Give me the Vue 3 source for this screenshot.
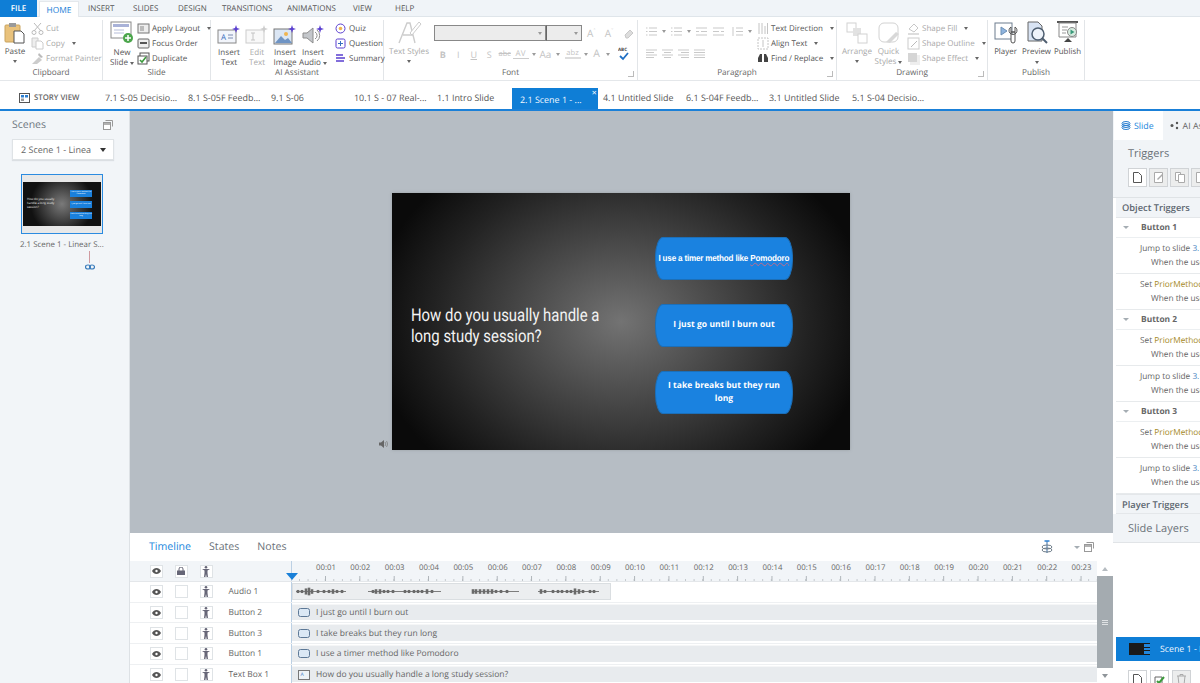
<script setup>
const topTabs = [
  { t: 'INSERT', w: 26, ml: 9 }, { t: 'SLIDES', w: 24, ml: 19 }, { t: 'DESIGN', w: 28, ml: 21 },
  { t: 'TRANSITIONS', w: 50, ml: 16 }, { t: 'ANIMATIONS', w: 47, ml: 15 }, { t: 'VIEW', w: 20, ml: 19 }, { t: 'HELP', w: 18, ml: 22 }
]
const slideTabs = [
  '7.1 S-05 Decisio...', '8.1 S-05F Feedb...', '9.1 S-06', '10.1 S - 07 Real-...', '1.1 Intro Slide',
  '2.1 Scene 1 - ...', '4.1 Untitled Slide', '6.1 S-04F Feedb...', '3.1 Untitled Slide', '5.1 S-04 Decisio...'
]
const seconds = Array.from({ length: 23 }, (_, i) => '00:' + String(i + 1).padStart(2, '0'))
const tracks = [
  { name: 'Button 2', text: 'I just go until I burn out', kind: 'btn' },
  { name: 'Button 3', text: 'I take breaks but they run long', kind: 'btn' },
  { name: 'Button 1', text: 'I use a timer method like Pomodoro', kind: 'btn' },
  { name: 'Text Box 1', text: 'How do you usually handle a long study session?', kind: 'txt' }
]
const triggerGroups = [
  { name: 'Button 1', items: [['Jump to slide ', '3.1 Untitled', 'link'], ['Set ', 'PriorMethod', 'var']] },
  { name: 'Button 2', items: [['Set ', 'PriorMethod', 'var'], ['Jump to slide ', '3.1 Untitled', 'link']] },
  { name: 'Button 3', items: [['Set ', 'PriorMethod', 'var'], ['Jump to slide ', '3.1 Untitled', 'link']] }
]
const waveLines = ['M3 7.500H53', 'M75 7.500H148', 'M180 7.500H226', 'M245 7.500H306']
const wave = [[5,2],[9,2],[13,4],[16,5],[19,3],[25,2],[31,2],[36,2],[40,3],[44,2],[49,2],[80,2],[83,3],[87,3],[91,2],[95,2],[100,2],[112,2],[116,2],[121,2],[125,2],[129,2],[134,3],[139,2],[180,3],[183,3],[187,3],[191,3],[195,3],[199,3],[203,2],[208,2],[214,2],[248,3],[252,2],[260,2],[265,2],[269,2],[274,2],[278,2],[282,4],[286,3],[290,2],[297,2],[301,2]]
</script>

<template>
  <div class="app">
    <!-- top menu -->
    <div class="menubar">
      <div class="file">FILE</div>
      <div class="home">HOME</div>
      <div v-for="x in topTabs" :key="x.t" class="menuitem" :style="{ width: x.w + 'px', marginLeft: x.ml + 'px' }">{{ x.t }}</div>
    </div>

    <!-- ribbon -->
    <div class="ribbon">
      <div class="group g-clip">
        <div class="gbody">
          <div class="big paste">
            <svg width="22" height="22" viewBox="0 0 22 22"><rect x="1" y="3" width="15" height="17" rx="1" fill="#e9c27c" stroke="#c9a35f"/><rect x="5" y="1" width="7" height="4" fill="#9a9a9a"/><path d="M10 9h7l3 3v9H10z" fill="#fff" stroke="#555"/></svg>
            <span>Paste</span><i class="caret"></i>
          </div>
          <div class="smalls dim">
            <div class="sm"><svg width="13" height="13" viewBox="0 0 13 13"><path d="M3 1l7 8M10 1L3 9" stroke="#bbb" fill="none"/><circle cx="3" cy="10.5" r="2" fill="none" stroke="#bbb"/><circle cx="10" cy="10.5" r="2" fill="none" stroke="#bbb"/></svg>Cut</div>
            <div class="sm"><svg width="13" height="13" viewBox="0 0 13 13"><path d="M1 1h6v9H1z" fill="#eee" stroke="#ccc"/><path d="M5 4h5l2 2v6H5z" fill="#fff" stroke="#ccc"/></svg>Copy<i class="caret side"></i></div>
            <div class="sm"><svg width="13" height="13" viewBox="0 0 13 13"><path d="M1 12l7-7 3 3-5 4z" fill="#ccc"/><path d="M8 1l4 4-2 1-3-3z" fill="#bbb"/></svg>Format Painter</div>
          </div>
        </div>
        <div class="glabel">Clipboard</div>
      </div>

      <div class="group g-slide">
        <div class="gbody">
          <div class="big newslide">
            <svg width="24" height="24" viewBox="0 0 24 24"><rect x="1" y="2" width="20" height="16" fill="#fff" stroke="#8a8a8a"/><rect x="3" y="4" width="16" height="3" fill="#a9b2d8"/><path d="M4 10h10M4 13h10" stroke="#b6bdd9"/><circle cx="18" cy="18" r="5" fill="#4ca64c"/><path d="M18 15v6M15 18h6" stroke="#fff" stroke-width="1.5"/></svg>
            <span>New</span><span>Slide<i class="caret side tight"></i></span>
          </div>
          <div class="smalls">
            <div class="sm"><svg width="13" height="13" viewBox="0 0 13 13"><rect x="1" y="2" width="11" height="9" fill="#eee" stroke="#777"/><path d="M3 4h4v5H3z" fill="#bbb"/></svg>Apply Layout<i class="caret side"></i></div>
            <div class="sm"><svg width="13" height="13" viewBox="0 0 13 13"><rect x="1" y="2" width="11" height="9" rx="1" fill="#eee" stroke="#666"/><path d="M3 6h7" stroke="#555" stroke-width="2"/></svg>Focus Order</div>
            <div class="sm"><svg width="13" height="13" viewBox="0 0 13 13"><rect x="3" y="1" width="9" height="8" fill="#fff" stroke="#555"/><rect x="1" y="4" width="9" height="8" fill="#fff" stroke="#555"/><path d="M3 8l2 2 4-5" stroke="#3c9a3c" stroke-width="1.6" fill="none"/></svg>Duplicate</div>
          </div>
        </div>
        <div class="glabel">Slide</div>
      </div>

      <div class="group g-ai">
        <div class="gbody">
          <div class="big ai"><svg width="24" height="20" viewBox="0 0 24 20"><rect x="1" y="5" width="18" height="13" fill="#f2f5fb" stroke="#888"/><text x="4" y="15" font-size="8" fill="#3a6fc0" font-family="Open Sans">A</text><path d="M11 10h5M11 13h5" stroke="#7a8ab0"/><path d="M19 0l1 3 3 1-3 1-1 3-1-3-3-1 3-1z" fill="#5a3fd0"/></svg><span>Insert</span><span>Text</span></div>
          <div class="big ai dim"><svg width="24" height="20" viewBox="0 0 24 20"><rect x="1" y="5" width="18" height="13" fill="#f8f8f8" stroke="#ccc"/><path d="M8 8v7M6 8h4M6 15h4" stroke="#c4c4c4"/><path d="M19 0l1 3 3 1-3 1-1 3-1-3-3-1 3-1z" fill="#ccc"/></svg><span>Edit</span><span>Text</span></div>
          <div class="big ai"><svg width="24" height="20" viewBox="0 0 24 20"><rect x="1" y="4" width="18" height="15" fill="#dbe6f4" stroke="#777"/><path d="M2 18l6-7 4 4 3-2 4 5z" fill="#6f94c4"/><circle cx="13" cy="9" r="2" fill="#f0b550"/><path d="M19 0l1 3 3 1-3 1-1 3-1-3-3-1 3-1z" fill="#5a3fd0"/></svg><span>Insert</span><span>Image</span></div>
          <div class="big ai"><svg width="24" height="20" viewBox="0 0 24 20"><path d="M2 8h4l6-5v15l-6-5H2z" fill="#c4c7cb" stroke="#8d8d8d"/><path d="M14 7a4 4 0 0 1 0 7M16 5a7 7 0 0 1 0 11" stroke="#8d8d8d" fill="none"/><path d="M19 0l1 3 3 1-3 1-1 3-1-3-3-1 3-1z" fill="#5a3fd0"/></svg><span>Insert</span><span>Audio<i class="caret side tight"></i></span></div>
          <div class="smalls quiz">
            <div class="sm"><svg width="11" height="11" viewBox="0 0 11 11"><circle cx="5.5" cy="5.5" r="4.5" fill="none" stroke="#5a3fd0"/><circle cx="5.5" cy="5.5" r="1.8" fill="#f0b550"/></svg>Quiz</div>
            <div class="sm"><svg width="11" height="11" viewBox="0 0 11 11"><rect x="1" y="1" width="9" height="9" rx="1.5" fill="none" stroke="#5a3fd0"/><path d="M5.5 3v5M3 5.5h5" stroke="#3a6fc0"/></svg>Question</div>
            <div class="sm"><svg width="11" height="11" viewBox="0 0 11 11"><path d="M1 2h7M1 5h9M1 8h8" stroke="#5a3fd0" stroke-width="1.4"/></svg>Summary</div>
          </div>
        </div>
        <div class="glabel">AI Assistant</div>
      </div>

      <div class="group g-font">
        <div class="gbody">
          <div class="big styles dim"><svg width="26" height="24" viewBox="0 0 26 24"><path d="M3 23L11 3h3l5 20M7 15h10" stroke="#ccc" fill="none" stroke-width="1.4"/><path d="M14 13L23 2l2 2-9 11z" fill="#fff" stroke="#ccc"/></svg><span>Text Styles</span><i class="caret"></i></div>
          <div class="fontcol">
            <div class="fontrow">
              <div class="fbox name"><i class="caret"></i></div>
              <div class="fbox size"><i class="caret"></i></div>
              <div class="glyphs first"><span>A<sup>ˆ</sup></span><span>A<sup>ˇ</sup></span>
                <svg width="11" height="11" viewBox="0 0 11 11"><path d="M2 7l5-5 3 3-5 5H3z" fill="#ddd" stroke="#c8c8c8"/></svg>
              </div>
            </div>
            <div class="fontrow second">
              <b class="gf">B</b><i class="gf">I</i><u class="gf">U</u><span class="gf shad">S</span><s class="gf small">abc</s>
              <span class="gf av">AV</span><i class="caret side"></i><span class="gf aa">Aa</span><i class="caret side"></i>
              <span class="gf small hl">ab<em>z</em></span><i class="caret side"></i><span class="gf big-a">A</span><i class="caret side"></i>
              <svg class="abc" width="12" height="14" viewBox="0 0 12 14"><text x="0" y="4" font-size="4.5" font-family="Open Sans" font-weight="700" fill="#444">ABC</text><path d="M2 9l3 3 5-6" stroke="#1f6fc4" stroke-width="1.8" fill="none"/></svg>
            </div>
          </div>
        </div>
        <div class="glabel withlaunch">Font<span class="launch"></span></div>
      </div>

      <div class="group g-para">
        <div class="gbody">
          <div class="paracol dim">
            <div class="pararow">
              <svg width="13" height="11" viewBox="0 0 13 11"><path d="M4 2h8M4 5.5h8M4 9h8M1 2h1.500M1 5.5h1.500M1 9h1.500" stroke="#c9c9c9"/></svg><i class="caret side"></i>
              <svg width="13" height="11" viewBox="0 0 13 11"><path d="M4 2h8M4 5.5h8M4 9h8M1 2h1.500M1 5.5h1.500M1 9h1.500" stroke="#c9c9c9"/></svg><i class="caret side"></i>
              <svg width="13" height="11" viewBox="0 0 13 11"><path d="M1 2h11M6 5.5h6M1 9h11M1 5.5h3" stroke="#c9c9c9"/></svg>
              <svg width="13" height="11" viewBox="0 0 13 11"><path d="M1 2h11M1 5.5h6M1 9h11M9 5.5h3" stroke="#c9c9c9"/></svg>
              <svg class="lsp" width="13" height="11" viewBox="0 0 13 11"><path d="M5 2h7M5 5.5h7M5 9h7M2 1v9" stroke="#c9c9c9"/></svg><i class="caret side"></i>
            </div>
            <div class="pararow align">
              <svg width="13" height="9" viewBox="0 0 13 9"><path d="M1 1h11M1 3.5h8M1 6h11M1 8.500h8" stroke="#c9c9c9"/></svg>
              <svg width="13" height="9" viewBox="0 0 13 9"><path d="M1 1h11M3 3.5h7M1 6h11M3 8.500h7" stroke="#c9c9c9"/></svg>
              <svg width="13" height="9" viewBox="0 0 13 9"><path d="M1 1h11M4 3.5h8M1 6h11M4 8.500h8" stroke="#c9c9c9"/></svg>
              <svg width="13" height="9" viewBox="0 0 13 9"><path d="M1 1h11M1 3.500h11M1 6h11M1 8.500h11" stroke="#c9c9c9"/></svg>
            </div>
          </div>
          <div class="smalls pside">
            <div class="sm dim"><svg width="12" height="13" viewBox="0 0 12 13"><path d="M2 1v11M5 1v11M8 4v8M10.500 1v11" stroke="#c4c4c4"/></svg>Text Direction<i class="caret side"></i></div>
            <div class="sm dim"><svg width="12" height="13" viewBox="0 0 12 13"><path d="M1 1h10v11H1z" fill="none" stroke="#c4c4c4" stroke-dasharray="2 1"/><path d="M6 3v7" stroke="#c4c4c4"/></svg>Align Text<i class="caret side"></i></div>
            <div class="sm"><svg width="12" height="13" viewBox="0 0 12 13"><path d="M1 6l2-4h2v8H1zM11 6L9 2H7v8h4z" fill="#444"/></svg>Find / Replace<i class="caret side"></i></div>
          </div>
        </div>
        <div class="glabel withlaunch">Paragraph<span class="launch"></span></div>
      </div>

      <div class="group g-draw">
        <div class="gbody">
          <div class="big arr dim"><svg width="22" height="22" viewBox="0 0 22 22"><rect x="1" y="1" width="9" height="9" fill="#fff" stroke="#d2d2d2"/><rect x="7" y="6" width="8" height="8" fill="#e2e2e2"/><rect x="12" y="12" width="9" height="9" fill="#fff" stroke="#d2d2d2"/></svg><span>Arrange</span><i class="caret"></i></div>
          <div class="big qs dim"><svg width="22" height="22" viewBox="0 0 22 22"><rect x="1" y="1" width="19" height="19" rx="5" fill="#fff" stroke="#d2d2d2"/><path d="M8 20l10-10 3 2-9 9z" fill="#d8d8d8"/></svg><span>Quick</span><span>Styles<i class="caret side tight"></i></span></div>
          <div class="smalls dim shp">
            <div class="sm"><svg width="13" height="13" viewBox="0 0 13 13"><path d="M2 7l5-5 4 4-4 4z" fill="#fff" stroke="#c8c8c8"/><path d="M1 12h11" stroke="#ddd" stroke-width="2"/></svg>Shape Fill<i class="caret side"></i></div>
            <div class="sm"><svg width="13" height="13" viewBox="0 0 13 13"><rect x="1" y="1" width="11" height="11" fill="#fff" stroke="#ccc"/><path d="M4 10l6-6" stroke="#bbb"/></svg>Shape Outline<i class="caret side"></i></div>
            <div class="sm"><svg width="13" height="13" viewBox="0 0 13 13"><rect x="3" y="3" width="10" height="10" fill="#eee"/><rect x="1" y="1" width="9" height="9" fill="#d5d5d5"/></svg>Shape Effect<i class="caret side"></i></div>
          </div>
        </div>
        <div class="glabel withlaunch">Drawing<span class="launch"></span></div>
      </div>

      <div class="group g-pub">
        <div class="gbody">
          <div class="big pub"><svg width="24" height="24" viewBox="0 0 24 24"><rect x="1" y="2" width="17" height="16" fill="#fff" stroke="#6d7c8e"/><path d="M7 6l6 4-6 4z" fill="#8fb4de" stroke="#6d8fb4"/><path d="M17 6a4 4 0 1 0 4 0v5h-4zM17 11h4v9a2 2 0 0 1-4 0z" fill="#fff" stroke="#555"/></svg><span>Player</span></div>
          <div class="big pub"><svg width="24" height="24" viewBox="0 0 24 24"><path d="M3 1h10l4 4v15H3z" fill="#d8e3f3" stroke="#666"/><circle cx="13" cy="13" r="6" fill="#eef3fa" stroke="#4e5e70" stroke-width="1.5"/><path d="M17 17l5 5" stroke="#4e5e70" stroke-width="2"/></svg><span>Preview</span><i class="caret"></i></div>
          <div class="big pub"><svg width="24" height="24" viewBox="0 0 24 24"><path d="M1 1h21" stroke="#555" stroke-width="2"/><path d="M3 2h17v14H3z" fill="#fff" stroke="#888"/><path d="M6 6h6M6 9h5M6 12h4" stroke="#999"/><circle cx="16" cy="11" r="4.500" fill="#d6ebdf" stroke="#888"/><path d="M14.500 8.500l4 2.500-4 2.500z" fill="#3a9a7a"/><path d="M8 21h8l-4-4z" fill="#444"/></svg><span>Publish</span></div>
        </div>
        <div class="glabel">Publish</div>
      </div>
    </div>

    <!-- slide tabs -->
    <div class="tabstrip">
      <div class="storyview">
        <svg width="11" height="10" viewBox="0 0 11 10"><rect x=".5" y=".5" width="10" height="9" fill="#fff" stroke="#555"/><rect x="2" y="2" width="3" height="2.500" fill="#2b7fd1"/><rect x="6" y="2" width="3" height="2.500" fill="#2b7fd1"/><rect x="2" y="5.500" width="3" height="2.500" fill="#999"/></svg>
        STORY VIEW
      </div>
      <div v-for="(t, i) in slideTabs" :key="t" class="stab" :class="{ active: i === 5 }">
        {{ t }}<span v-if="i === 5" class="x">✕</span>
      </div>
    </div>

    <div class="main">
      <!-- scenes -->
      <aside class="scenes">
        <div class="sc-head">
          <span>Scenes</span>
          <svg width="10" height="10" viewBox="0 0 10 10"><path d="M2.500.5h7v6" fill="none" stroke="#999"/><rect x=".5" y="2.500" width="7" height="7" fill="#fff" stroke="#999"/><path d="M.5 4h7" stroke="#999" stroke-width="1.500"/></svg>
        </div>
        <div class="sc-select"><span>2 Scene 1 - Linea</span><i class="caret dark"></i></div>
        <div class="thumb">
          <div class="thumb-slide">
            <div class="tq">How do you usually handle a long study session?</div>
            <div class="tbtns"><div>I use a timer method like Pomodoro</div><div>I just go until I burn out</div><div>I take breaks but they run long</div></div>
          </div>
        </div>
        <div class="thumb-label">2.1 Scene 1 - Linear S...</div>
        <div class="thumb-line"></div>
        <svg class="thumb-link" width="10" height="6" viewBox="0 0 10 6"><ellipse cx="3" cy="3" rx="2.500" ry="2" fill="none" stroke="#3a7cbc" stroke-width="1.200"/><ellipse cx="7" cy="3" rx="2.500" ry="2" fill="none" stroke="#3a7cbc" stroke-width="1.200"/></svg>
      </aside>

      <!-- center -->
      <section class="center">
        <div class="canvas">
          <div class="slide">
            <div class="question">How do you usually handle a long study session?</div>
            <div class="sbtn b1"><span>I use a timer method like <u>Pomodoro</u></span></div>
            <div class="sbtn b2"><span>I just go until I burn out</span></div>
            <div class="sbtn b3"><span>I take breaks but they run long</span></div>
            <svg class="speaker" width="9" height="8" viewBox="0 0 9 8"><path d="M0 2.500h2L5 0v8L2 5.500H0z" fill="#666"/><path d="M6 2a3 3 0 0 1 0 4M7.500 1a4.500 4.500 0 0 1 0 6" stroke="#777" fill="none" stroke-width=".7"/></svg>
          </div>
        </div>

        <div class="timeline">
          <div class="tl-tabs">
            <span class="on">Timeline</span><span>States</span><span>Notes</span>
            <div class="tl-tools">
              <svg width="12" height="14" viewBox="0 0 12 14"><path d="M6 1v12" stroke="#3a6fa8"/><path d="M3.500 1h5" stroke="#2b7fd1" stroke-width="1.500"/><ellipse cx="6" cy="7" rx="5" ry="2" fill="none" stroke="#6d7c88"/><ellipse cx="6" cy="10" rx="5" ry="2" fill="none" stroke="#6d7c88"/></svg>
              <i class="caret grey"></i>
              <svg width="10" height="10" viewBox="0 0 10 10"><path d="M2.500.5h7v6" fill="none" stroke="#999"/><rect x=".5" y="2.500" width="7" height="7" fill="#fff" stroke="#999"/><path d="M.5 4h7" stroke="#999" stroke-width="1.500"/></svg>
            </div>
          </div>
          <div class="tl-body">
            <div class="tl-grid">
              <div class="row header">
                <div class="ctrl">
                  <div class="cb"><svg width="9" height="6" viewBox="0 0 9 6"><path d="M0 3c2-4 7-4 9 0-2 4-7 4-9 0z" fill="#555"/><circle cx="4.500" cy="3" r="1.200" fill="#fff"/></svg></div>
                  <div class="cb"><svg width="8" height="8" viewBox="0 0 8 8"><rect y="3.500" width="8" height="4.500" fill="#667"/><path d="M2 4V2a2 2 0 0 1 4 0v2" stroke="#667" fill="none"/></svg></div>
                  <div class="cb"><svg width="10" height="11" viewBox="0 0 10 11"><circle cx="5" cy="1.300" r="1.300" fill="#667"/><path d="M1 3h8l-2.500 1.500V7L7 11H5.600L5 8l-.6 3H3l.5-4V4.500z" fill="#667"/></svg></div>
                </div>
                <div class="ruler">
                  <span v-for="s in seconds" :key="s">{{ s }}</span>
                  <i class="playhead"></i>
                </div>
              </div>
              <div class="row">
                <div class="ctrl">
                  <div class="cb"><svg width="9" height="6" viewBox="0 0 9 6"><path d="M0 3c2-4 7-4 9 0-2 4-7 4-9 0z" fill="#555"/><circle cx="4.500" cy="3" r="1.200" fill="#fff"/></svg></div>
                  <div class="cb"></div>
                  <div class="cb"><svg width="10" height="11" viewBox="0 0 10 11"><circle cx="5" cy="1.300" r="1.300" fill="#667"/><path d="M1 3h8l-2.500 1.500V7L7 11H5.600L5 8l-.6 3H3l.5-4V4.500z" fill="#667"/></svg></div>
                  <span class="nm">Audio 1</span>
                </div>
                <div class="track">
                  <div class="audio">
                    <svg width="318" height="15" viewBox="0 0 318 15"><path v-for="l in waveLines" :key="l" :d="l" stroke="#7d7d7d"/><path v-for="(w, i) in wave" :key="i" :d="`M${w[0]} ${7.500 - w[1] / 1.300}V${7.500 + w[1] / 1.300}`" stroke="#6a6a6a" stroke-width="2.600"/></svg>
                  </div>
                </div>
              </div>
              <div v-for="t in tracks" :key="t.name" class="row">
                <div class="ctrl">
                  <div class="cb"><svg width="9" height="6" viewBox="0 0 9 6"><path d="M0 3c2-4 7-4 9 0-2 4-7 4-9 0z" fill="#555"/><circle cx="4.500" cy="3" r="1.200" fill="#fff"/></svg></div>
                  <div class="cb"></div>
                  <div class="cb"><svg width="10" height="11" viewBox="0 0 10 11"><circle cx="5" cy="1.300" r="1.300" fill="#667"/><path d="M1 3h8l-2.500 1.500V7L7 11H5.600L5 8l-.6 3H3l.5-4V4.500z" fill="#667"/></svg></div>
                  <span class="nm">{{ t.name }}</span>
                </div>
                <div class="track">
                  <div class="bar">
                    <svg v-if="t.kind === 'btn'" width="12" height="9" viewBox="0 0 12 9"><rect x=".5" y=".5" width="11" height="8" rx="2" fill="#dbe8f5" stroke="#5d7896"/></svg>
                    <svg v-else width="12" height="10" viewBox="0 0 12 10"><rect x=".5" y=".5" width="11" height="9" fill="#eef2f6" stroke="#777"/><text x="2.500" y="6" font-size="5" fill="#2b6fc4" font-family="Open Sans">A</text></svg>
                    <span>{{ t.text }}</span>
                  </div>
                </div>
              </div>
            </div>
            <div class="vscroll">
              <div class="arrow up"></div>
              <div class="vthumb"><i></i><i></i><i></i></div>
              <div class="arrow down"></div>
            </div>
          </div>
        </div>
      </section>

      <!-- right panel -->
      <aside class="right">
        <div class="r-tabs">
          <div class="r-tab on">
            <svg width="10" height="9" viewBox="0 0 10 9"><ellipse cx="5" cy="2.500" rx="4" ry="2" fill="none" stroke="#2b7fd1"/><ellipse cx="5" cy="4.500" rx="4" ry="2" fill="none" stroke="#2b7fd1"/><ellipse cx="5" cy="6.500" rx="4" ry="2" fill="none" stroke="#2b7fd1"/></svg>
            Slide
          </div>
          <div class="r-tab">
            <svg width="10" height="9" viewBox="0 0 10 9"><circle cx="2" cy="4.500" r="1.500" fill="#555"/><circle cx="7" cy="2" r="1.200" fill="#555"/><circle cx="7" cy="7" r="1.200" fill="#555"/></svg>
            AI Assistant
          </div>
        </div>
        <div class="r-trig">
          <div class="r-title">Triggers</div>
          <div class="r-tools">
            <div class="tbtn white"><svg width="9" height="11" viewBox="0 0 9 11"><path d="M.5.500h5l3 3v7h-8z" fill="#fff" stroke="#555"/></svg></div>
            <div class="tbtn"><svg width="10" height="11" viewBox="0 0 10 11"><path d="M.5.500h8v10h-8z" fill="#fff" stroke="#aaa"/><path d="M3 7l5-5 1 1-5 5z" fill="#aaa"/></svg></div>
            <div class="tbtn"><svg width="10" height="11" viewBox="0 0 10 11"><path d="M.5.500h5v8h-5z" fill="#fff" stroke="#aaa"/><path d="M3.500 2.500h6v8h-6z" fill="#fff" stroke="#aaa"/></svg></div>
            <div class="tbtn"><svg width="10" height="11" viewBox="0 0 10 11"><path d="M.5.500h8v10h-8z" fill="#fff" stroke="#aaa"/></svg></div>
          </div>
        </div>
        <div class="r-list">
          <div class="r-head">Object Triggers</div>
          <template v-for="g in triggerGroups" :key="g.name">
            <div class="r-group"><i class="caret grey"></i><b>{{ g.name }}</b></div>
            <div v-for="(it, j) in g.items" :key="j" class="r-item">
              <div>{{ it[0] }}<span :class="it[2]">{{ it[1] }}</span></div>
              <div class="when">When the user clicks</div>
            </div>
          </template>
          <div class="r-head player">Player Triggers</div>
        </div>
        <div class="r-layers">Slide Layers</div>
        <div class="r-space"></div>
        <div class="r-scene">
          <div class="mini"><i></i><i></i><i></i></div>
          <span>Scene 1 - Linear</span>
        </div>
        <div class="r-foot">
          <div class="tbtn white"><svg width="9" height="11" viewBox="0 0 9 11"><path d="M.5.500h5l3 3v7h-8z" fill="#fff" stroke="#555"/></svg></div>
          <div class="tbtn white"><svg width="11" height="11" viewBox="0 0 11 11"><path d="M1 3h7v8H1z" fill="#fff" stroke="#666"/><path d="M3 7l2 2 5-6" stroke="#3c9a3c" stroke-width="2" fill="none"/></svg></div>
          <div class="tbtn"><svg width="9" height="11" viewBox="0 0 9 11"><path d="M0 2h9M1 2l1 9h5l1-9M3 2V.5h3V2" fill="none" stroke="#aaa"/></svg></div>
        </div>
      </aside>
    </div>
  </div>
</template>

<style scoped>
.app { width: 1200px; height: 683px; overflow: hidden; background: #fff; font-family: "Open Sans", sans-serif; color: #555; display: flex; flex-direction: column; font-size: 8.5px; text-rendering: geometricPrecision; }
svg { flex: none; display: block; }
i { font-style: normal; }

.caret { display: block; width: 0; height: 0; border: 2.5px solid transparent; border-top: 3px solid #666; border-bottom: 0; }
.caret.side { margin-left: 5px; flex: none; }
.caret.tight { display: inline-block; margin-left: 2px; vertical-align: middle; }
.caret.dark { border-width: 3.5px; border-top-width: 4px; border-bottom: 0; border-top-color: #333; }
.caret.grey { border-top-color: #a5adb3; border-width: 3px; border-bottom: 0; }

.menubar { height: 17px; box-sizing: border-box; background: #f0f4f8; display: flex; align-items: center; border-bottom: 1px solid #dfe5ea; flex: none; }
.file { width: 37px; height: 17px; background: #0f7ed6; color: #fff; font-weight: 600; display: flex; align-items: center; justify-content: center; font-size: 8px; }
.home { width: 40px; height: 17px; box-sizing: border-box; margin-left: 2px; background: #fff; color: #1b80d8; border: 1px solid #e4e8ec; border-bottom: 0; display: flex; align-items: center; justify-content: center; font-size: 8.4px; align-self: flex-start; margin-top: 1px; }
.menuitem { white-space: nowrap; font-size: 8px; color: #555; }

.ribbon { height: 64px; box-sizing: border-box; display: flex; flex: none; background: #fff; border-bottom: 1px solid #e4e7ea; }
.group { display: flex; flex-direction: column; border-right: 1px solid #e2e5e8; margin: 3px 0 0; flex: none; box-sizing: border-box; }
.gbody { flex: 1; display: flex; min-height: 0; }
.glabel { height: 14px; line-height: 14px; text-align: center; color: #666; font-size: 8.2px; position: relative; }
.launch { position: absolute; right: 3px; top: 5px; width: 5px; height: 5px; border-right: 1px solid #bbb; border-bottom: 1px solid #bbb; }
.g-clip { width: 103px; }
.g-slide { width: 108px; }
.g-ai { width: 173px; }
.g-font { width: 254px; }
.g-para { width: 199px; }
.g-draw { width: 151px; }
.g-pub { width: 97px; }

.big { display: flex; flex-direction: column; align-items: center; line-height: 9.5px; font-size: 8.1px; color: #555; padding-top: 1px; flex: none; }
.big svg { margin-bottom: 4px; }
.big .caret { margin-top: 3px; }
.paste { width: 30px; padding-top: 2px; }
.paste svg { margin-bottom: 3px; }
.newslide { width: 30px; margin-left: 4px; padding-top: 0; }
.newslide svg { margin-bottom: 4px; }
.dim, .dim .sm { color: #a9a9a9; }
.smalls { display: flex; flex-direction: column; padding-top: 1px; gap: 0; }
.sm { height: 15.500px; display: flex; align-items: center; gap: 2px; white-space: nowrap; color: #555; font-size: 8px; }
.g-clip .smalls { margin-left: 1px; }
.g-slide .smalls { margin-left: 0; }

.ai { width: 28px; margin-left: 0; padding-top: 5px; }
.ai:first-child { margin-left: 4px; }
.ai svg { margin-bottom: 3px; }
.quiz { margin-left: 8px; }
.quiz .sm { gap: 3px; }

.styles { width: 44px; padding-top: 0; margin-left: 3px; }
.styles svg { margin-top: 0; margin-bottom: 3px; }
.fontcol { padding-left: 3px; display: flex; flex-direction: column; }
.fontrow { display: flex; align-items: center; height: 20px; margin-top: 3px; }
.fbox { height: 16px; box-sizing: border-box; border: 1px solid #888; background: #ececec; display: flex; align-items: center; justify-content: flex-end; padding-right: 3px; }
.fbox .caret { border-top-color: #999; }
.fbox.name { width: 112px; }
.fbox.size { width: 36px; border-left: 1px solid #666; }
.glyphs { display: flex; align-items: center; gap: 9px; margin-left: 5px; color: #c4c4c4; font-size: 10px; }
.glyphs sup { font-size: 6px; line-height: 0; }
.second { height: 20px; margin-top: 1px; padding-left: 1px; color: #c4c4c4; }
.gf { font-size: 9px; width: 15.500px; text-align: center; flex: none; font-style: normal; }
.gf.small { font-size: 7.500px; }
.gf.small em { font-style: normal; }
.gf.av { width: 16px; font-size: 8px; border-bottom: 1px solid #ccc; line-height: 9px; }
.gf.aa { margin-left: 3px; width: 14px; font-size: 10px; }
.gf.hl { margin-left: 5px; width: 16px; border-bottom: 2px solid #ddd; line-height: 8px; }
.gf.big-a { font-size: 10.500px; width: 12px; margin-left: 3px; }
.second .caret.side { margin-left: 3px; border-top-color: #9b9b9b; }
.abc { margin-left: 8px; }

.paracol { margin-left: 7px; display: flex; flex-direction: column; width: 112px; flex: none; }
.pararow { display: flex; align-items: center; height: 20px; margin-top: 1px; }
.pararow svg { margin-right: 0; }
.pararow .caret.side { margin: 0 4px 0 4px; border-top-color: #999; }
.pararow svg + svg { margin-left: 4px; }
.pararow .lsp { margin-left: 6px; }
.align { margin-top: 0; padding-top: 2px; gap: 3px; }
.align svg + svg { margin-left: 0; }
.pside { flex: none; width: 80px; }

.arr { width: 34px; margin-left: 3px; padding-top: 2px; }
.qs { width: 29px; padding-top: 2px; margin-left: 0; }
.arr svg, .qs svg { margin-bottom: 3px; }
.shp { margin-left: 4px; }
.pub { width: 31px; padding-top: 1px; font-size: 7.900px; }
.pub:first-child { margin-left: 2px; }
.pub svg { margin-bottom: 3px; }

.tabstrip { height: 30px; border-bottom: 2px solid #1a80d8; display: flex; align-items: stretch; flex: none; box-sizing: border-box; }
.storyview { width: 100px; flex: none; box-sizing: border-box; padding-left: 19px; display: flex; align-items: center; gap: 4px; font-weight: 600; font-size: 7.800px; color: #666; margin-top: 5px; white-space: nowrap; }
.stab { width: 83px; box-sizing: border-box; padding: 5px 0 0 5px; display: flex; align-items: center; white-space: nowrap; font-size: 8.950px; color: #555; flex: none; position: relative; }
.stab.active { width: 86px; margin-left: -3px; padding-left: 8px; background: #0f7ed6; color: #f2f8ff; margin-top: 7px; padding-top: 1px; }
.x { position: absolute; top: 0; right: 1px; font-size: 6.500px; color: #fff; line-height: 9px; }

.main { flex: 1; min-height: 0; display: flex; }

.scenes { width: 130px; flex: none; box-sizing: border-box; background: #f2f5f8; border-right: 1px solid #dde1e5; display: flex; flex-direction: column; position: relative; }
.sc-head { display: flex; justify-content: space-between; align-items: center; height: 28px; padding: 0 16px 0 12px; font-size: 10.500px; color: #6d7680; }
.sc-select { margin-left: 12px; width: 102px; height: 21px; box-sizing: border-box; background: #fff; border: 1px solid #dfe3e6; box-shadow: 0 1px 1px #dbdfe3; display: flex; align-items: center; justify-content: space-between; padding: 0 7px 0 8px; font-size: 9px; color: #666; white-space: nowrap; }
.thumb { margin: 14px 0 0 21px; width: 82px; height: 60px; box-sizing: border-box; border: 1px solid #2b8be0; padding: 7px 1px; background: #e8e8e8; }
.thumb-slide { height: 100%; background: radial-gradient(circle at 50% 50%, #7a7a7a 0, #111 70%); display: flex; align-items: center; justify-content: space-between; padding: 0 9px 0 4px; box-sizing: border-box; }
.tq { color: #eee; font-size: 3px; line-height: 3.800px; width: 30px; }
.tbtns { display: flex; flex-direction: column; gap: 4px; width: 22px; }
.tbtns div { height: 7px; background: #1a80dc; color: #fff; font-size: 1.800px; line-height: 2.300px; text-align: center; display: flex; align-items: center; justify-content: center; }
.thumb-label { margin: 6px 0 0 20px; font-size: 7.900px; color: #666; white-space: nowrap; }
.thumb-line { width: 1px; height: 12px; margin: 1px 0 0 89px; background: #d09aa0; }
.thumb-link { margin: 1px 0 0 85px; }

.center { flex: 1; min-width: 0; display: flex; flex-direction: column; }
.canvas { height: 422px; flex: none; background: #b6bdc4; display: flex; align-items: center; justify-content: center; }
.slide { width: 458px; height: 257px; position: relative; background: radial-gradient(ellipse 250px 200px at 50% 50%, #737373 0%, #4a4a4a 38%, #222 75%, #0a0a0a 100%); box-shadow: 0 0 3px #9aa0a6; margin: -1px 0 0 -1px; }
.question { position: absolute; left: 19px; top: 113px; width: 232px; color: #f3f3f3; font-family: Roboto, sans-serif; font-size: 17.700px; line-height: 21px; transform: scaleX(.842); transform-origin: left top; }
.sbtn { position: absolute; left: 263px; width: 138px; box-sizing: border-box; background: #1a82e0; border: 1px solid #1c6fb8; border-radius: 8px / 20px; display: flex; align-items: center; justify-content: center; text-align: center; color: #fff; font-weight: 700; font-size: 8.500px; line-height: 12.500px; padding: 0 3px; letter-spacing: .05px; }
.b1 { top: 44px; height: 43px; font-family: "Liberation Sans", sans-serif; padding: 0; white-space: nowrap; font-size: 8.900px; letter-spacing: -.2px; }
.b1 span { display: inline-block; transform: scaleX(.91); }
.b1 u { text-decoration: underline wavy #c26b8a; text-decoration-thickness: .5px; }
.b2 { top: 111px; height: 43px; }
.b3 { top: 178px; height: 43px; }
.speaker { position: absolute; left: -13px; bottom: 2px; }

.timeline { flex: 1; min-height: 0; background: #fff; display: flex; flex-direction: column; }
.tl-tabs { height: 28px; flex: none; display: flex; align-items: center; gap: 18px; padding: 0 19px 0 19px; box-sizing: border-box; font-size: 10.600px; color: #6b7279; }
.tl-tabs .on { color: #2186dc; }
.tl-tools { margin-left: auto; display: flex; align-items: center; gap: 0; }
.tl-tools .caret { margin: 0 4px 0 21px; }
.tl-body { flex: 1; min-height: 0; display: flex; }
.tl-grid { flex: 1; min-width: 0; display: flex; flex-direction: column; overflow: hidden; }
.row { display: flex; height: 20.700px; flex: none; border-bottom: 1px solid #eef0f2; box-sizing: border-box; }
.row.header { background: #f2f5f8; height: 21px; border-bottom: 1px solid #e4e7ea; }
.ctrl { width: 162px; flex: none; box-sizing: border-box; display: flex; align-items: center; padding-left: 19.500px; gap: 12px; border-right: 1px solid #bcd0e4; }
.cb { width: 13px; height: 13px; box-sizing: border-box; border: 1px solid #dfe3e6; background: #fff; display: flex; align-items: center; justify-content: center; flex: none; }
.nm { font-size: 8.400px; color: #666; margin-left: 4px; white-space: nowrap; }
.ruler { flex: 1; position: relative; display: flex; padding-left: 24px; font-size: 7.800px; color: #666; background-image: linear-gradient(90deg, #aeb4b9 1px, transparent 1px), linear-gradient(90deg, #c3c8cc 1px, transparent 1px); background-size: 34.350px 5px, 8.588px 2px; background-position: 33px bottom, 7px bottom; background-repeat: repeat-x; }
.ruler span { width: 34.350px; flex: none; padding-top: 2px; text-align: left; white-space: nowrap; }
.playhead { position: absolute; left: -6px; bottom: 1px; width: 0; height: 0; border: 6px solid transparent; border-top: 7px solid #1a80d8; border-bottom: 0; }
.track { flex: 1; min-width: 0; padding: 1px 0 2px; box-sizing: border-box; }
.audio { width: 319px; height: 100%; background: #eceef0; border: 1px solid #dadee1; box-sizing: border-box; display: flex; align-items: center; }
.bar { height: 100%; background: #e8ebee; display: flex; align-items: center; gap: 6px; padding-left: 6px; font-size: 8.500px; color: #666; white-space: nowrap; border-top: 1px solid #f5f6f7; box-sizing: border-box; }

.vscroll { width: 16px; flex: none; display: flex; flex-direction: column; background: #f3f4f5; }
.arrow { height: 15px; flex: none; display: flex; align-items: center; justify-content: center; background: #fff; }
.arrow::after { content: ""; border: 3px solid transparent; }
.up::after { border-bottom: 4px solid #b6bcc1; border-top: 0; }
.down::after { border-top: 4px solid #8f959a; border-bottom: 0; }
.vthumb { flex: 1; background: #a4abb0; display: flex; flex-direction: column; align-items: center; justify-content: center; gap: 1px; }
.vthumb i { width: 6px; height: 1px; background: #dfe2e4; }

.right { width: 87px; flex: none; overflow: hidden; display: flex; flex-direction: column; background: #fff; white-space: nowrap; }
.r-tabs { height: 29px; display: flex; flex: none; background: #f1f4f7; padding-left: 1px; }
.r-tab { display: flex; align-items: center; gap: 3px; padding: 0 9px 0 7px; font-size: 8.800px; color: #666; flex: none; }
.r-tab.on { color: #2186dc; background: #fff; }
.r-trig { height: 58px; background: #f1f4f7; flex: none; padding-left: 15px; margin-left: 0; box-sizing: border-box; border-bottom: 1px solid #dfe3e6; }
.r-title { font-size: 11px; color: #6b7279; padding-top: 6px; line-height: 15px; }
.r-tools { display: flex; gap: 2px; margin-top: 7px; }
.tbtn { width: 19px; height: 19px; box-sizing: border-box; border: 1px solid #d0d3d6; background: #eceded; display: flex; align-items: center; justify-content: center; flex: none; }
.tbtn.white { background: #fff; }
.r-list { margin-left: 3px; flex: none; display: flex; flex-direction: column; }
.r-head { height: 20px; line-height: 20px; background: #f1f4f7; font-weight: 600; font-size: 9.300px; color: #5c6670; padding-left: 6px; border-bottom: 1px solid #e4e7ea; box-sizing: border-box; }
.r-head.player { border-top: 1px solid #e4e7ea; }
.r-group { height: 20px; display: flex; align-items: center; gap: 0; border-bottom: 1px solid #eceff1; padding-left: 7px; box-sizing: border-box; }
.r-group .caret { margin-right: 12px; }
.r-group b { font-weight: 700; font-size: 8.400px; color: #666; }
.r-item { height: 36px; box-sizing: border-box; border-bottom: 1px solid #e7eaec; padding: 4px 0 0 24px; font-size: 8.300px; line-height: 14.300px; color: #666; }
.when { padding-left: 11px; }
.link { color: #3a7cbc; }
.var { color: #a68a1f; }
.r-layers { height: 29px; line-height: 29px; flex: none; background: #f1f4f7; padding-left: 15px; font-size: 11px; color: #6b7279; border-bottom: 1px solid #e1e4e7; box-sizing: border-box; }
.r-space { height: 94px; flex: none; }
.r-scene { height: 24px; flex: none; margin-left: 3px; background: #0f7ed6; display: flex; align-items: center; color: #f2f8ff; font-size: 8.800px; padding-left: 13px; gap: 10px; }
.mini { width: 21px; height: 12px; background: #1a1a1a; display: flex; flex-direction: column; align-items: flex-end; justify-content: center; gap: 1px; flex: none; }
.mini i { width: 6px; height: 2.500px; background: #2186dc; }
.r-foot { display: flex; gap: 3px; padding: 9px 0 0 15px; flex: none; }
</style>

<style>
html, body { margin: 0; overflow: hidden; }
</style>
